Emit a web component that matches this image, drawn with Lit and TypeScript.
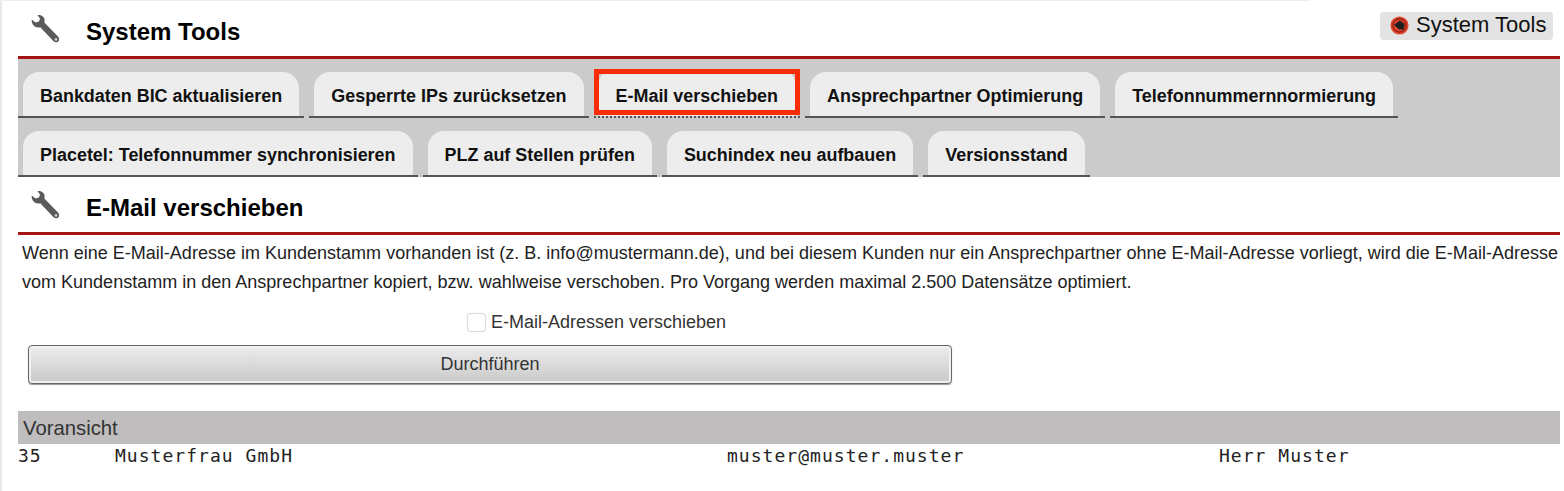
import { LitElement, html, css, svg } from "lit";
import { customElement } from "lit/decorators.js";

const wrench = svg`<svg class="wrench" viewBox="0 0 30 30" width="30" height="30" aria-hidden="true">
  <path fill="#5a5a5a" d="M6.5 1.2 C9.6 0.6 13 2.2 13.6 5.6 C13.8 6.8 13.6 7.8 13.3 8.6 L27 22.4 C28.6 24 28.5 26.2 27.2 27.4 C25.8 28.7 23.8 28.6 22.5 27.2 L9.3 13.2 C8.2 13.6 6.6 13.7 5 13 C2 11.7 0.3 8.7 0.8 5.5 L4.5 8.6 L8 7.6 L9 4.4 Z"/>
  <circle cx="25" cy="25.4" r="1.3" fill="#d0d0d0"/>
</svg>`;

const row1 = [
  "Bankdaten BIC aktualisieren",
  "Gesperrte IPs zurücksetzen",
  "E-Mail verschieben",
  "Ansprechpartner Optimierung",
  "Telefonnummernnormierung",
];
const row2 = [
  "Placetel: Telefonnummer synchronisieren",
  "PLZ auf Stellen prüfen",
  "Suchindex neu aufbauen",
  "Versionsstand",
];

@customElement("app-root")
export class AppRoot extends LitElement {
  static styles = css`
    :host {
      display: block;
      width: 1564px;
      height: 491px;
      overflow: hidden;
      background: #fff;
      font-family: "Liberation Sans", Arial, sans-serif;
      color: #333;
    }
    .page {
      box-sizing: border-box;
      width: 1560px;
      height: 491px;
      padding-left: 18px;
      background:
        linear-gradient(#eee, #eee) 0 0 / 1310px 1px no-repeat,
        linear-gradient(#e8e8e8, #e8e8e8) 0 0 / 2px 100% no-repeat;
    }
    .head {
      display: flex;
      align-items: flex-start;
      height: 56px;
      box-sizing: border-box;
      padding: 14px 7px 0 13px;
    }
    .wrench { flex: none; }
    .head h1, .sub h2 {
      margin: 0;
      font-size: 24px;
      line-height: 28px;
      font-weight: 700;
      color: #000;
      margin-left: 25px;
    }
    .head h1 { padding-top: 4px; }
    .pill {
      margin-left: auto;
      margin-top: -2px;
      height: 28px;
      width: 173px;
      box-sizing: border-box;
      padding: 0 0 2px 10px;
      display: flex;
      align-items: center;
      gap: 7px;
      background: #e3e3e3;
      border-radius: 4px;
      font-size: 22px;
      color: #111;
      white-space: nowrap;
    }
    .pill svg { flex: none; }
    .tabs {
      background: #cbcbcb;
      border-top: 3px solid #a51414;
      height: 105px;
      padding-top: 13px;
    }
    .row {
      display: flex;
      gap: 5px;
      height: 46px;
    }
    .row + .row { margin-top: 13px; }
    .tabwrap {
      padding: 0 5px;
      border-bottom: 2px solid #555;
      height: 44px;
    }
    .tab {
      height: 44px;
      box-sizing: border-box;
      padding: 4px 17px 0;
      display: flex;
      align-items: center;
      background: #ededed;
      border-radius: 16px 16px 0 0;
      font-size: 17.95px;
      font-weight: 700;
      color: #111;
      white-space: nowrap;
    }
    .tabwrap.active {
      border-bottom: 2px dotted #555;
      position: relative;
    }
    .tabwrap.active .tab {
      border-radius: 10px 10px 0 0;
    }
    .tabwrap.active::after {
      content: "";
      position: absolute;
      inset: -3px 0 1px 0;
      border: 5px solid #fb2c05;
      pointer-events: none;
    }
    .sub {
      height: 58px;
      box-sizing: border-box;
      border-bottom: 3px solid #a51414;
      display: flex;
      align-items: flex-start;
      padding: 13px 0 0 13px;
    }
    .sub h2 { padding-top: 4px; }
    .desc {
      margin: 4px 0 0 4px;
      font-size: 18.03px;
      line-height: 29px;
      color: #222;
      white-space: nowrap;
    }
    .check {
      display: flex;
      align-items: center;
      margin: 13px 0 0 449px;
      height: 24px;
      font-size: 18px;
      color: #333;
      gap: 5px;
    }
    .box {
      width: 17px;
      height: 17px;
      border: 1px solid #dcdcdc;
      border-radius: 4px;
      background: #fff;
      box-shadow: 0 0 1px #ddd;
    }
    .btn {
      display: flex;
      align-items: center;
      justify-content: center;
      box-sizing: border-box;
      width: 924px;
      height: 39px;
      margin: 11px 0 0 10px;
      border: 1px solid #666;
      border-radius: 4px;
      background: linear-gradient(#ececec, #c9c9c9);
      box-shadow: inset 0 0 0 2px #f1f1f1, 0 1px 1px #999;
      font-size: 18px;
      color: #333;
    }
    .pv {
      margin-top: 27px;
      height: 33px;
      box-sizing: border-box;
      padding: 5px 0 0 5px;
      background: #bfbdbd;
      font-size: 20.3px;
      line-height: 24px;
      color: #333;
    }
    .data {
      display: grid;
      grid-template-columns: 97px 612px 492px auto;
      padding-top: 1px;
      font-family: "DejaVu Sans Mono", monospace;
      font-size: 18px;
      letter-spacing: 1.03px;
      line-height: 22px;
      color: #222;
    }
  `;

  private tabs(items: string[]) {
    return html`<div class="row">
      ${items.map(
        (t) => html`<div class="tabwrap ${t === "E-Mail verschieben" ? "active" : ""}">
          <div class="tab">${t}</div>
        </div>`
      )}
    </div>`;
  }

  render() {
    return html`<div class="page">
      <header class="head">
        ${wrench}
        <h1>System Tools</h1>
        <div class="pill">
          <svg viewBox="0 0 20 20" width="19" height="19" aria-hidden="true">
            <circle cx="10" cy="10" r="9.5" fill="#e0442c" />
            <circle cx="10" cy="10" r="7" fill="none" stroke="#8e1c12" stroke-width="1.2" />
            <path d="M4.2 9.6 L10.4 4.8 L15.4 8.4 L14.6 14.2 L9.6 14.2 Z" fill="#1e1e1e" />
          </svg>
          <span>System Tools</span>
        </div>
      </header>
      <nav class="tabs">${this.tabs(row1)}${this.tabs(row2)}</nav>
      <section class="sub">${wrench}<h2>E-Mail verschieben</h2></section>
      <p class="desc">
        Wenn eine E-Mail-Adresse im Kundenstamm vorhanden ist (z. B. info@mustermann.de), und bei diesem Kunden nur ein Ansprechpartner ohne E-Mail-Adresse vorliegt, wird die E-Mail-Adresse<br />
        vom Kundenstamm in den Ansprechpartner kopiert, bzw. wahlweise verschoben. Pro Vorgang werden maximal 2.500 Datensätze optimiert.
      </p>
      <label class="check"><span class="box"></span>E-Mail-Adressen verschieben</label>
      <div class="btn">Durchführen</div>
      <div class="pv">Voransicht</div>
      <div class="data">
        <span>35</span><span>Musterfrau GmbH</span><span>muster@muster.muster</span><span>Herr Muster</span>
      </div>
    </div>`;
  }
}
